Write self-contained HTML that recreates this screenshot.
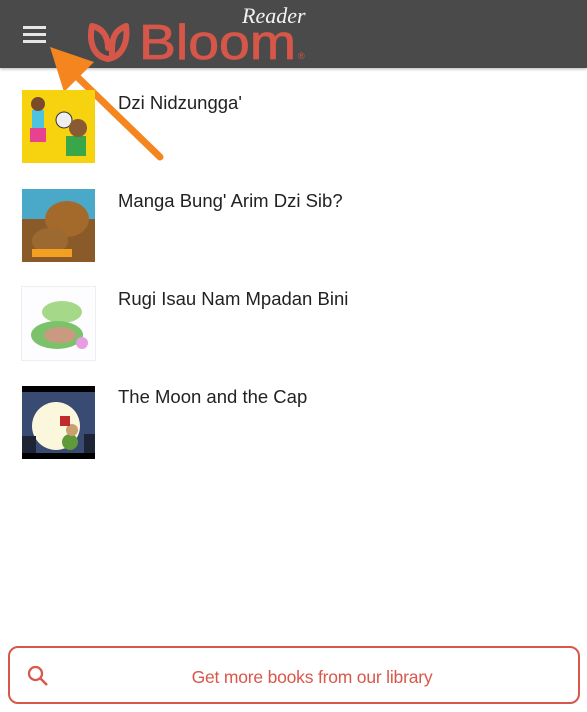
<!DOCTYPE html>
<html><head><meta charset="utf-8"><style>
html,body{margin:0;padding:0;width:587px;height:712px;background:#fff;overflow:hidden;font-family:"Liberation Sans",sans-serif;position:relative}
.hdr{position:absolute;left:0;top:0;width:587px;height:68px;background:#4a4a4a;box-shadow:0 1px 3px rgba(0,0,0,.3)}
.bar{position:absolute;left:23px;width:23px;height:2.5px;background:#e6e6e6}
.thumb{position:absolute;left:22px;width:73px;height:73px}
.title{position:absolute;left:118px;font-size:18.5px;color:#222}
.btn{position:absolute;left:8px;top:646px;width:572px;height:58px;border:2px solid #d9574a;border-radius:10px;box-sizing:border-box}
</style></head><body>
<div class="hdr">
<div class="bar" style="top:26px"></div><div class="bar" style="top:33px"></div><div class="bar" style="top:40px"></div>
<svg style="position:absolute;left:86px;top:20px" width="50" height="44" viewBox="0 0 50 44">
<g fill="none" stroke="#d65649" stroke-width="6" stroke-linejoin="round" stroke-linecap="round">
<path d="M6 6 C3 20 6 36 22 39 C38 36 42 20 40 6"/>
<path d="M6 6 C16 8 22 16 22 28"/>
<path d="M40 6 C30 10 26 16 26 30 L26 38"/>
</g></svg>
<div style="position:absolute;left:139px;top:19px;font-size:49px;line-height:49px;color:#d65649;transform:scaleX(1.13);transform-origin:0 0;-webkit-text-stroke:0.8px #d65649">Bloom</div>
<div style="position:absolute;left:242px;top:3px;font-size:22px;font-style:italic;color:#f2f2f2;font-family:'Liberation Serif',serif">Reader</div>
<div style="position:absolute;left:298px;top:51px;font-size:9px;color:#d65649">®</div>
</div>
<svg style="position:absolute;left:40px;top:40px" width="130" height="130" viewBox="0 0 130 130"><line x1="120" y1="117" x2="26" y2="26" stroke="#f4851f" stroke-width="7" stroke-linecap="round"/><polygon points="10,7 54,22 24,52" fill="#f4851f"/></svg>

<div class="thumb" style="top:90px;background:#f6d20f"><svg width="73" height="73"><rect x="10" y="20" width="12" height="18" fill="#4cc3df"/><rect x="8" y="38" width="16" height="14" fill="#e8418f"/><circle cx="16" cy="14" r="7" fill="#7a4a2a"/><circle cx="42" cy="30" r="8" fill="#eee" stroke="#333"/><rect x="44" y="46" width="20" height="20" fill="#3aa64a"/><circle cx="56" cy="38" r="9" fill="#8a5a35"/></svg></div>
<div class="title" style="top:92px">Dzi Nidzungga'</div>
<div class="thumb" style="top:189px;background:#8a5a28"><svg width="73" height="73"><rect width="73" height="30" fill="#4aa8c9"/><ellipse cx="45" cy="30" rx="22" ry="18" fill="#a36a2c"/><ellipse cx="28" cy="52" rx="18" ry="13" fill="#9c6a30"/><rect x="10" y="60" width="40" height="8" fill="#f2a022"/></svg></div>
<div class="title" style="top:190px">Manga Bung' Arim Dzi Sib?</div>
<div class="thumb" style="top:287px;background:#fdfcff;outline:1px solid #eee"><svg width="73" height="73"><ellipse cx="40" cy="25" rx="20" ry="11" fill="#a6d88a"/><ellipse cx="35" cy="48" rx="26" ry="14" fill="#7cc26a"/><ellipse cx="38" cy="48" rx="16" ry="8" fill="#c99a80"/><circle cx="60" cy="56" r="6" fill="#e99ce0"/></svg></div>
<div class="title" style="top:288px">Rugi Isau Nam Mpadan Bini</div>
<div class="thumb" style="top:386px;background:#394a73"><svg width="73" height="73"><rect width="73" height="6" fill="#000"/><rect y="67" width="73" height="6" fill="#000"/><circle cx="34" cy="40" r="24" fill="#fbf7dc"/><circle cx="48" cy="56" r="8" fill="#5e9a3a"/><circle cx="50" cy="44" r="6" fill="#c9a070"/><rect x="38" y="30" width="10" height="10" fill="#c02a2a"/><rect x="0" y="50" width="14" height="17" fill="#1d2435"/><rect x="62" y="48" width="11" height="19" fill="#1d2435"/></svg></div>
<div class="title" style="top:386px">The Moon and the Cap</div>

<div class="btn">
<svg style="position:absolute;left:16px;top:16px" width="24" height="24" viewBox="0 0 24 24"><circle cx="9.5" cy="9.5" r="6.5" fill="none" stroke="#d9574a" stroke-width="2.3"/><line x1="14.5" y1="14.5" x2="21" y2="21" stroke="#d9574a" stroke-width="2.5"/></svg>
<div style="position:absolute;left:0;right:0;top:19px;text-align:center;font-size:17.5px;color:#d9574a;padding-left:36px;letter-spacing:-0.2px">Get more books from our library</div>
</div>
</body></html>
